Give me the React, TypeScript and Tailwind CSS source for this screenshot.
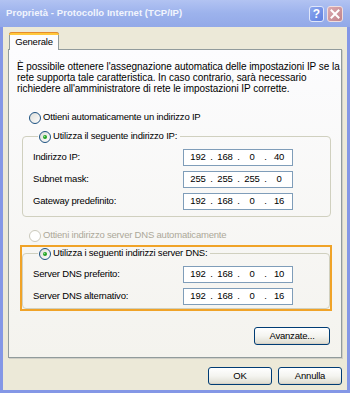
import React from 'react';

const Radio: React.FC<{ checked?: boolean; disabled?: boolean }> = ({ checked, disabled }) => (
  <svg width="12" height="12" viewBox="0 0 12 12" className="shrink-0">
    <defs>
      <linearGradient id="rg" x1="0" y1="0" x2="1" y2="1">
        <stop offset="0" stopColor="#dcdcd6" />
        <stop offset="1" stopColor="#ffffff" />
      </linearGradient>
    </defs>
    <circle cx="6" cy="6" r="5.5" fill={disabled ? '#ffffff' : 'url(#rg)'} stroke={disabled ? '#cac8bb' : '#1c5180'} strokeWidth="1" />
    {checked && <circle cx="6" cy="6" r="2" fill="#21a121" />}
    {checked && <circle cx="5.5" cy="5.5" r="0.8" fill="#8fe08f" />}
  </svg>
);

const IpBox: React.FC<{ parts: string[] }> = ({ parts }) => (
  <div className="w-[110px] h-[17px] border border-[#7f9db9] bg-white flex items-center pl-[3px] text-black">
    {parts.map((p, i) => (
      <React.Fragment key={i}>
        <span className="w-[22px] text-center">{p}</span>
        {i < 3 && <span className="w-[5px] text-center">.</span>}
      </React.Fragment>
    ))}
  </div>
);

const Row: React.FC<{ label: string; parts: string[] }> = ({ label, parts }) => (
  <div className="flex items-center h-[17px]">
    <span className="w-[150px]">{label}</span>
    <IpBox parts={parts} />
  </div>
);

const XpButton: React.FC<{ label: string; className?: string }> = ({ label, className }) => (
  <button className={`h-[18px] rounded-[3px] border border-[#003c74] bg-gradient-to-b from-white via-[#f4f4f0] to-[#dedcd0] shadow-[inset_0_-1px_0_#d6d0c5] text-black flex items-center justify-center ${className ?? ''}`}>
    {label}
  </button>
);

export default function App() {
  return (
    <div className="w-[350px] h-[393px] bg-[#8497e6] flex flex-col font-['Liberation_Sans',Arial,sans-serif] text-[9.5px] tracking-[-0.2px] text-black overflow-hidden">
      {/* Title bar */}
      <div className="h-[27px] shrink-0 bg-gradient-to-b from-[#b2c3f2] via-[#9cb2ec] to-[#93a9e8] flex items-center pl-[6px] pr-[7px]">
        <span className="text-[#f2f5fd] font-bold text-[9.5px] tracking-[0.05px] flex-1">Proprietà - Protocollo Internet (TCP/IP)</span>
        <div className="flex gap-[3px] items-center">
          <div className="w-[15px] h-[16px] rounded-[3px] border border-[#dfe6fa] bg-gradient-to-br from-[#8ea8ee] to-[#5f7fe0] flex items-center justify-center text-white font-bold text-[12px] tracking-normal leading-none">?</div>
          <div className="w-[16px] h-[16px] rounded-[3px] border border-[#f0dede] bg-gradient-to-br from-[#dcaab0] to-[#c0848c] flex items-center justify-center">
            <svg width="10" height="10" viewBox="0 0 10 10">
              <path d="M1.5 1.5 L8.5 8.5 M8.5 1.5 L1.5 8.5" stroke="#ffffff" strokeWidth="2" strokeLinecap="square" />
            </svg>
          </div>
        </div>
      </div>

      {/* Body */}
      <div className="flex-1 mx-[3px] mb-[3px] bg-[#ece9d8] flex flex-col px-[5px] pt-[5px]">
        {/* Tab strip */}
        <div className="flex h-[17px] pl-[1px]">
          <div className="relative z-10 w-[50px] h-[18px] bg-[#fcfcfe] border border-b-0 border-[#919b9c] rounded-t-[3px] flex items-center justify-center pt-[2px]">
            <div className="absolute -top-px -left-px -right-px h-[3px] rounded-t-[3px] bg-[#ffc83c] border-t border-[#e68b2c]" />
            Generale
          </div>
        </div>

        {/* Panel */}
        <div className="h-[309px] border border-[#919b9c] bg-gradient-to-b from-[#fcfcfe] to-[#f4f3ee] flex flex-col shadow-[1px_1px_0_#d0cfc7]">
          <p className="mt-[11px] ml-[8px] leading-[11px] whitespace-nowrap text-[10px] tracking-[-0.05px]">
            È possibile ottenere l'assegnazione automatica delle impostazioni IP se la
            <br />
            rete supporta tale caratteristica. In caso contrario, sarà necessario
            <br />
            richiedere all'amministratore di rete le impostazioni IP corrette.
          </p>

          <div className="mt-[17px] ml-[20px] flex items-center gap-[2px] h-[13px]">
            <Radio />
            <span>Ottieni automaticamente un indirizzo IP</span>
          </div>

          <fieldset className="mt-[6px] ml-[13px] w-[309px] border border-[#d0d0bf] rounded-[4px] pl-[10px] pb-[6px] flex flex-col gap-[5px]">
            <legend className="ml-[5px] pl-[1px] pr-[3px] flex items-center gap-[2px] h-[13px]">
              <Radio checked />
              <span>Utilizza il seguente indirizzo IP:</span>
            </legend>
            <div className="h-[1px]" />
            <Row label="Indirizzo IP:" parts={['192', '168', '0', '40']} />
            <Row label="Subnet mask:" parts={['255', '255', '255', '0']} />
            <Row label="Gateway predefinito:" parts={['192', '168', '0', '16']} />
          </fieldset>

          <div className="mt-[12px] ml-[20px] flex items-center gap-[2px] h-[13px] text-[#aca899]">
            <Radio disabled />
            <span>Ottieni indirizzo server DNS automaticamente</span>
          </div>

          <div className="mt-[3px] ml-[11px] w-[312px] border-2 border-[#f0a328]">
            <fieldset className="w-[308px] border border-[#d0d0bf] rounded-[4px] pl-[10px] pb-[3px] flex flex-col gap-[5px]">
              <legend className="ml-[5px] pl-[1px] pr-[3px] flex items-center gap-[2px] h-[13px]">
                <Radio checked />
                <span>Utilizza i seguenti indirizzi server DNS:</span>
              </legend>
              <div className="h-[1px]" />
              <Row label="Server DNS preferito:" parts={['192', '168', '0', '10']} />
              <Row label="Server DNS alternativo:" parts={['192', '168', '0', '16']} />
            </fieldset>
          </div>

          <div className="mt-[16px] flex justify-end pr-[11px]">
            <XpButton label="Avanzate..." className="w-[76px]" />
          </div>
        </div>

        {/* Dialog buttons */}
        <div className="mt-[9px] flex justify-end gap-[6px]">
          <XpButton label="OK" className="w-[64px]" />
          <XpButton label="Annulla" className="w-[64px]" />
        </div>
      </div>
    </div>
  );
}
